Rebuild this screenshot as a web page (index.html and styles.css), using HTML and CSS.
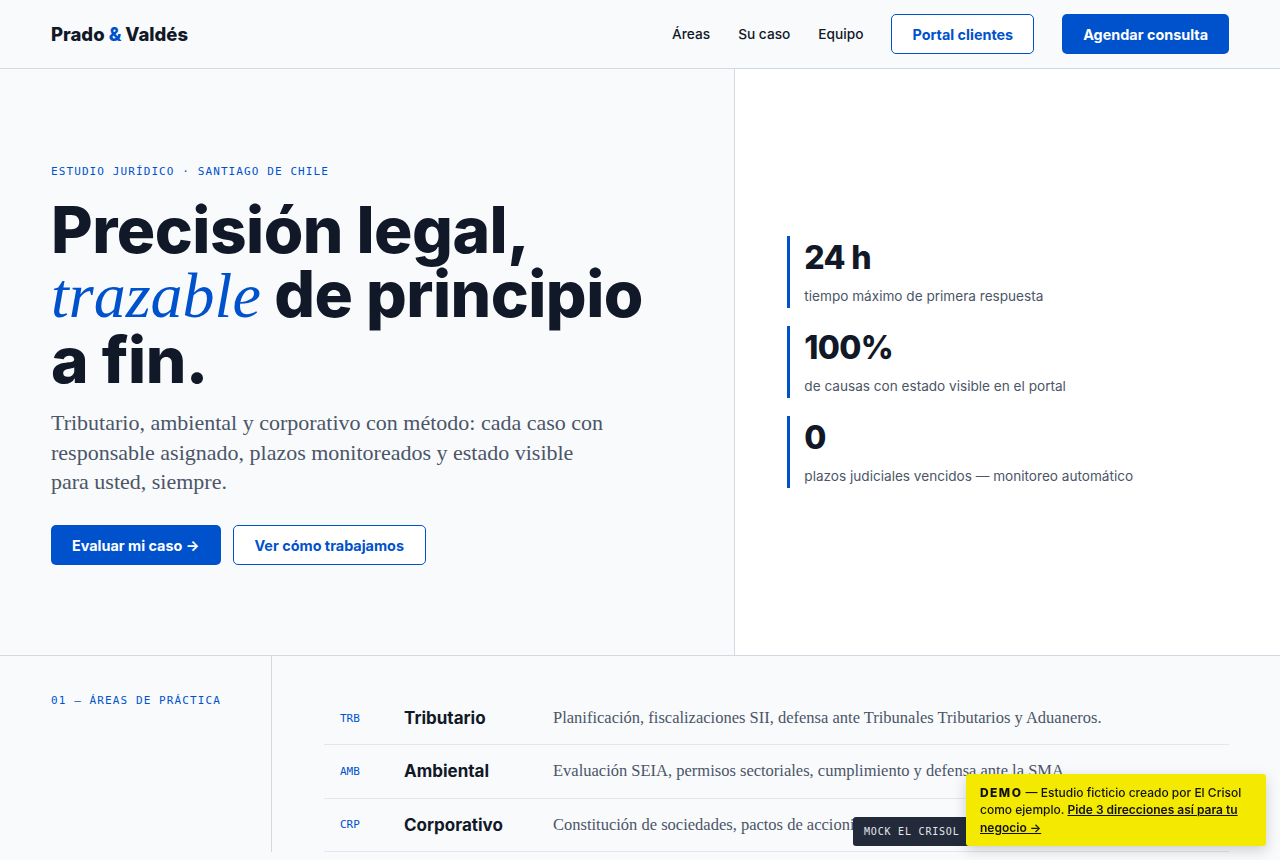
FILE: index.html
```html
<!DOCTYPE html>
<html lang="es">
  <head>
    <meta charset="UTF-8">
    <meta name="viewport" content="width=device-width, initial-scale=1.0">
    <title>Prado &amp; Valdés — Estudio jurídico</title>
    <link rel="stylesheet" href="styles.css">
  </head>
  <body>
    <header class="site-header">
      <a class="logo" href="#">Prado <span class="amp">&amp;</span> Valdés</a>
      <nav class="nav">
        <a href="#areas">Áreas</a>
        <a href="#caso">Su caso</a>
        <a href="#equipo">Equipo</a>
        <a class="btn btn-outline" href="#portal">Portal clientes</a>
        <a class="btn btn-solid" href="#agendar">Agendar consulta</a>
      </nav>
    </header>

    <section class="hero">
      <div class="hero-main">
        <p class="eyebrow">Estudio jurídico · Santiago de Chile</p>
        <h1 class="hero-title">Precisión legal,<br><em>trazable</em> de principio<br>a fin.</h1>
        <p class="hero-lead">Tributario, ambiental y corporativo con método: cada caso con responsable asignado, plazos monitoreados y estado visible para usted, siempre.</p>
        <div class="hero-actions">
          <a class="btn btn-solid" href="#agendar">Evaluar mi caso →</a>
          <a class="btn btn-outline" href="#metodo">Ver cómo trabajamos</a>
        </div>
      </div>
      <div class="hero-stats">
        <div class="stat">
          <strong>24 h</strong>
          <span>tiempo máximo de primera respuesta</span>
        </div>
        <div class="stat">
          <strong>100%</strong>
          <span>de causas con estado visible en el portal</span>
        </div>
        <div class="stat">
          <strong>0</strong>
          <span>plazos judiciales vencidos — monitoreo automático</span>
        </div>
      </div>
    </section>

    <section class="areas" id="areas">
      <div class="areas-side">
        <p class="eyebrow">01 — Áreas de práctica</p>
      </div>
      <div class="areas-list">
        <div class="area">
          <span class="area-code">TRB</span>
          <h3>Tributario</h3>
          <p>Planificación, fiscalizaciones SII, defensa ante Tribunales Tributarios y Aduaneros.</p>
        </div>
        <div class="area">
          <span class="area-code">AMB</span>
          <h3>Ambiental</h3>
          <p>Evaluación SEIA, permisos sectoriales, cumplimiento y defensa ante la SMA.</p>
        </div>
        <div class="area">
          <span class="area-code">CRP</span>
          <h3>Corporativo</h3>
          <p>Constitución de sociedades, pactos de accionistas, contratos y gobierno corporativo.</p>
        </div>
      </div>
    </section>

    <div class="mock-tag">MOCK EL CRISOL ·</div>
    <div class="demo-note">
      <b>DEMO</b> — Estudio ficticio creado por El Crisol como ejemplo. <a href="#">Pide 3 direcciones así para tu negocio →</a>
    </div>
  </body>
</html>
```

FILE: styles.css
```css
body {
  margin: 0;
  font-family: Inter, "Noto Sans", sans-serif;
  color: #111827;
  background-color: #f8fafc;
}

a {
  color: inherit;
  text-decoration: none;
}

/* header */
.site-header {
  height: 68px;
  padding: 0 51px;
  display: flex;
  align-items: center;
  justify-content: space-between;
  border-bottom: 1px solid #d4d8e0;
}

.logo {
  font-size: 18.5px;
  font-weight: 800;
  color: #111827;
}

.logo .amp {
  color: #0052cc;
}

.nav {
  display: flex;
  align-items: center;
  gap: 28px;
  font-size: 13.7px;
  font-weight: 500;
}

.btn {
  display: inline-flex;
  align-items: center;
  height: 40px;
  box-sizing: border-box;
  padding: 0 21px;
  border-radius: 5px;
  font-size: 14.4px;
  font-weight: 700;
}

.btn-solid {
  background-color: #0052cc;
  color: #ffffff;
}

.btn-outline {
  border: 1px solid #0052cc;
  background-color: #ffffff;
  color: #0052cc;
}

.nav .btn-outline {
  padding: 0 20px;
}

/* hero */
.hero {
  display: grid;
  grid-template-columns: 1.35fr 1fr;
  height: 586px;
  border-bottom: 1px solid #d4d8e0;
}

.hero-main {
  padding: 96px 51px 0;
  border-right: 1px solid #d4d8e0;
}

.eyebrow {
  margin: 0;
  font-family: "DejaVu Sans Mono", "Liberation Mono", monospace;
  font-size: 11px;
  letter-spacing: 0.1em;
  text-transform: uppercase;
  white-space: nowrap;
  color: #0052cc;
}

.hero-title {
  margin: 20px 0 0;
  font-size: 64px;
  line-height: 1;
  font-weight: 800;
  letter-spacing: -0.008em;
  color: #111827;
}

.hero-title em {
  font-family: "Liberation Serif", serif;
  font-weight: 400;
  letter-spacing: 0;
  color: #0052cc;
}

.hero-lead {
  margin: 16px 0 0;
  max-width: 560px;
  font-family: "Liberation Serif", serif;
  font-size: 22px;
  line-height: 1.35;
  color: #4b5567;
}

.hero-actions {
  display: flex;
  gap: 12px;
  margin-top: 28px;
}

.hero-stats {
  display: flex;
  flex-direction: column;
  justify-content: center;
  gap: 18px;
  padding: 0 52px;
  background-color: #ffffff;
}

.stat {
  display: flex;
  flex-direction: column;
  gap: 12px;
  padding: 4px 0 4px 14px;
  border-left: 3px solid #0052cc;
}

.stat strong {
  font-size: 32px;
  line-height: 36px;
  font-weight: 800;
  letter-spacing: -0.02em;
}

.stat span {
  font-size: 13.6px;
  line-height: 16px;
  color: #4b5567;
}

/* areas */
.areas {
  display: grid;
  grid-template-columns: 272px 1fr;
}

.areas-side {
  padding: 38px 0 0 51px;
  border-right: 1px solid #d4d8e0;
}

.areas-list {
  padding: 36px 51px 0 52px;
}

.area {
  display: grid;
  grid-template-columns: 64px 149px 1fr;
  align-items: center;
  padding: 0 16px;
  height: 53.3px;
  box-sizing: border-box;
  border-bottom: 1px solid #e3e6ea;
}

.area-code {
  font-family: "DejaVu Sans Mono", "Liberation Mono", monospace;
  font-size: 11px;
  color: #0052cc;
}

.area h3 {
  margin: 0;
  font-size: 17px;
  font-weight: 700;
}

.area p {
  margin: 0;
  font-family: "Liberation Serif", serif;
  font-size: 16.5px;
  color: #4b5567;
}

/* demo overlay */
.mock-tag {
  position: fixed;
  right: 297px;
  bottom: 14px;
  width: 130px;
  height: 29px;
  box-sizing: border-box;
  padding: 0 11px;
  display: flex;
  align-items: center;
  border-radius: 3px;
  background-color: #232b3b;
  color: #e5e7eb;
  font-family: "DejaVu Sans Mono", monospace;
  font-size: 10px;
  letter-spacing: 0.08em;
  white-space: nowrap;
}

.demo-note {
  position: fixed;
  right: 14px;
  bottom: 14px;
  width: 300px;
  box-sizing: border-box;
  padding: 10px 14px;
  border-radius: 3px;
  background-color: #f4e900;
  box-shadow: 0 4px 14px rgba(0, 0, 0, 0.18);
  font-size: 12px;
  line-height: 17.5px;
  font-weight: 500;
  color: #111111;
}

.demo-note b {
  letter-spacing: 0.12em;
  font-weight: 800;
}

.demo-note a {
  text-decoration: underline;
  font-weight: 600;
}
```
